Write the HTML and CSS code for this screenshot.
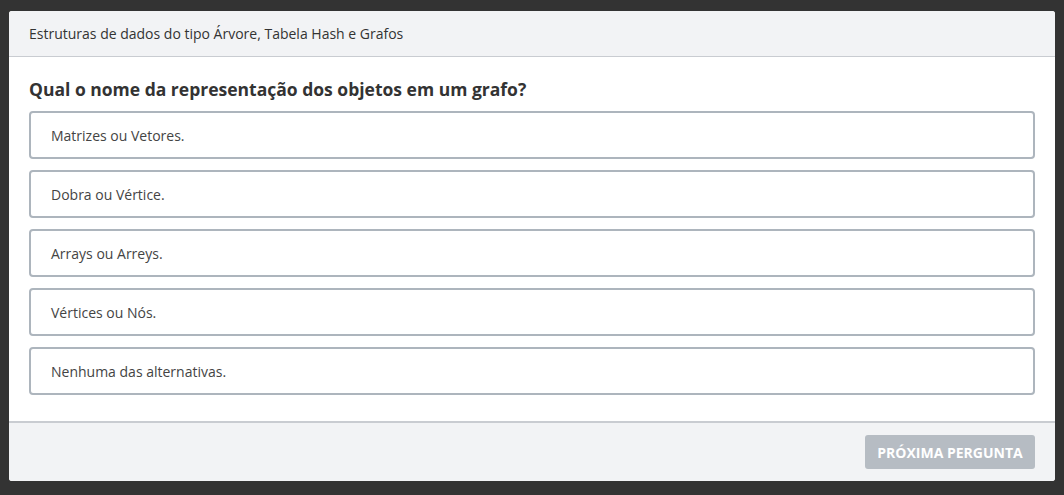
FILE: index.html
```html
<!DOCTYPE html>
<html lang="pt">
<head>
<meta charset="utf-8">
<link rel="stylesheet" href="styles.css">
</head>
<body>
<div class="card">
  <div class="card-header">Estruturas de dados do tipo Árvore, Tabela Hash e Grafos</div>
  <div class="card-body">
    <h2 class="question">Qual o nome da representação dos objetos em um grafo?</h2>
    <div class="options">
      <div class="option">Matrizes ou Vetores.</div>
      <div class="option">Dobra ou Vértice.</div>
      <div class="option">Arrays ou Arreys.</div>
      <div class="option">Vértices ou Nós.</div>
      <div class="option">Nenhuma das alternativas.</div>
    </div>
  </div>
  <div class="card-footer">
    <button class="btn-next" disabled>PRÓXIMA PERGUNTA</button>
  </div>
</div>
</body>
</html>
```
FILE: styles.css
```css
* { box-sizing: border-box; }
html, body { margin: 0; height: 100%; }
body {
  background: #333333;
  padding: 11px 9px 14px 9px;
  font-family: "Open Sans", "Noto Sans", sans-serif;
  color: #333;
}
.card {
  background: #fff;
  border-radius: 3px;
  height: 470px;
  display: flex;
  flex-direction: column;
  overflow: hidden;
}
.card-header {
  background: #f2f3f5;
  height: 46px;
  border-bottom: 1px solid #c9ccd1;
  padding: 0 20px;
  display: flex;
  align-items: center;
  font-size: 14px;
  color: #333;
}
.card-body {
  flex: 1;
  padding: 19px 20px 0 20px;
}
.question {
  margin: 0 0 9px 0;
  font-size: 17.5px;
  font-weight: 700;
  line-height: 26px;
  color: #333;
}
.options {
  display: flex;
  flex-direction: column;
  gap: 11px;
}
.option {
  height: 48px;
  border: 2px solid #adb5bd;
  border-radius: 4px;
  padding: 0 20px;
  display: flex;
  align-items: center;
  font-size: 14px;
  color: #444;
}
.card-footer {
  background: #f2f3f5;
  border-top: 2px solid #c9ccd1;
  height: 60px;
  padding: 0 20px;
  display: flex;
  align-items: center;
  justify-content: flex-end;
}
.btn-next {
  width: 170px;
  height: 34px;
  border: none;
  border-radius: 3px;
  background: #b6bcc3;
  color: #fff;
  font-family: "Open Sans", "Noto Sans", sans-serif;
  font-weight: 700;
  font-size: 14px;
  padding: 0;
}
```
